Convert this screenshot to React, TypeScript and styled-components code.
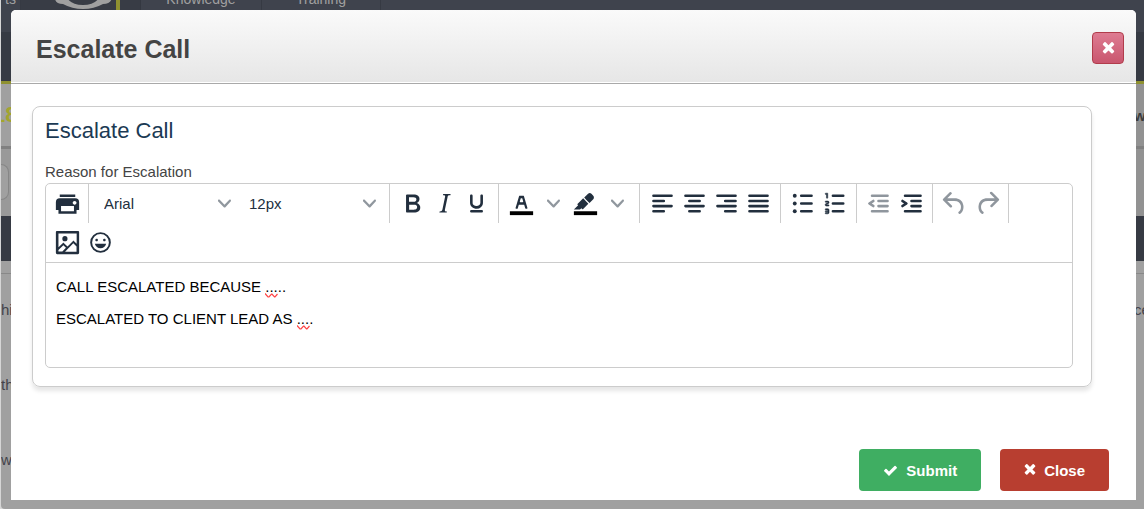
import React from 'react';
import styled, { createGlobalStyle } from 'styled-components';

const GlobalStyle = createGlobalStyle`
  *, *::before, *::after { box-sizing: border-box; }
  body {
    margin: 0;
    background: #d6d6d6;
    font-family: Arial, "Liberation Sans", sans-serif;
    font-size: 15px;
  }
`;

const Page = styled.div`
  position: relative;
  min-height: 100vh;
  display: flex;
`;

/* Dimmed application page behind the dialog */

const Backdrop = styled.div`
  flex: 1;
  min-width: 0;
  margin-left: 1px;
  overflow: hidden;
  background: #a0a0a0;
  border-radius: 0 0 0 4px;
`;

const NavBar = styled.nav`
  display: flex;
  height: 62px;
  margin-top: -30px;
  background: #3f434d;
`;

const NavItem = styled.a<{ $width: number }>`
  width: ${(p) => p.$width}px;
  border-right: 1px solid #363a43;
  color: #a0a0a0;
  font-size: 14px;
  line-height: 58px;
  text-align: center;
  text-decoration: none;
`;

const LogoSlot = styled.div`
  display: flex;
  align-items: flex-end;
  justify-content: flex-end;
  width: 120px;
  padding: 0 20px 0 0;
  background: #383c45;
  border-right: 1px solid #343841;
`;

const SubNav = styled.div`
  height: 52px;
  background: #363a43;
  border-bottom: 3px solid #8f9130;
`;

const TitleStrip = styled.div`
  display: flex;
  align-items: center;
  justify-content: space-between;
  height: 65px;
  border-bottom: 3px solid #808080;
  background: linear-gradient(90deg, #a0a0a0 50%, #929292 50%);
  color: #3c3c3c;
  font-weight: bold;
`;

const TicketNumber = styled.span`
  margin-left: -8px;
  color: #a3a52d;
  font-size: 22px;
`;

const Clipped = styled.span`
  width: 10px;
  white-space: nowrap;
`;

const FilterStrip = styled.div`
  height: 67px;
  background: linear-gradient(90deg, #999 50%, #929292 50%);
`;

const FilterPill = styled.div`
  width: 8px;
  height: 36px;
  margin-top: 15px;
  border: 1px solid #868686;
  border-left: 0;
  border-radius: 0 10px 10px 0;
  background: #a0a0a0;
  display: inline-block;
`;

const DarkBand = styled.div`
  height: 45px;
  background: #363a43;
`;

const TableHead = styled.div`
  height: 13px;
  border-bottom: 1px solid #888;
`;

const TableLine = styled.div`
  display: flex;
  justify-content: space-between;
  height: 75px;
  padding-top: 26px;
  color: #43434b;
  line-height: 20px;
`;

/* Dialog */

const Dialog = styled.section`
  position: absolute;
  inset: 10px 8px 9px 11px;
  display: flex;
  flex-direction: column;
  background: #fff;
  border-radius: 5px 5px 0 0;
`;

const DialogHeader = styled.header`
  display: flex;
  align-items: center;
  justify-content: space-between;
  padding: 22px 12px 16px 25px;
  border-bottom: 1px solid #a9a9a9;
  border-radius: 5px 5px 0 0;
  background: linear-gradient(#fafafa, #e6e6e6);
  box-shadow: inset 0 -1px 0 #fff;
`;

const DialogTitle = styled.h1`
  margin: 0;
  color: #444;
  font-size: 25px;
  line-height: 35px;
`;

const DismissButton = styled.button`
  display: flex;
  align-items: center;
  justify-content: center;
  align-self: flex-start;
  width: 32px;
  height: 32px;
  padding: 0;
  border: 1px solid #b13c4b;
  border-radius: 4px;
  background: linear-gradient(#de7c92, #c9566e);
  color: #fff;
`;

const DialogBody = styled.div`
  flex: 1;
  padding: 22px 44px 22px 21px;
`;

const Panel = styled.div`
  padding: 11px 18px 18px 12px;
  border: 1px solid #ccc;
  border-radius: 8px;
  box-shadow: 0 4px 4px rgba(0, 0, 0, 0.1);
`;

const PanelTitle = styled.h2`
  margin: 0 0 16px;
  color: #1b3a54;
  font-size: 22px;
  font-weight: normal;
  line-height: 26px;
`;

const FieldLabel = styled.div`
  padding-top: 1px;
  color: #444;
  line-height: 22px;
`;

const Editor = styled.div`
  border: 1px solid #ccc;
  border-radius: 5px;
`;

const Toolbar = styled.div`
  display: flex;
  flex-wrap: wrap;
  border-bottom: 1px solid #ccc;
  color: #222f3e;
`;

const ToolGroup = styled.div<{ $last?: boolean; $roomy?: boolean }>`
  display: flex;
  align-items: center;
  gap: ${(p) => (p.$roomy ? 0 : 1)}px;
  height: 39px;
  padding: 0 ${(p) => (p.$roomy ? 6 : 5)}px 1px;
  border-right: ${(p) => (p.$last ? '0' : '1px solid #ccc')};
`;

const PickerGroup = styled(ToolGroup)`
  gap: 0;
`;

const SplitButton = styled.div`
  display: flex;
`;

const ToolButton = styled.button`
  display: flex;
  align-items: center;
  justify-content: center;
  width: 32px;
  height: 32px;
  padding: 0;
  border: 0;
  background: none;
  color: inherit;

  &:disabled { opacity: 0.5; }
`;

const Picker = styled.label`
  display: grid;
  grid-template-columns: 1fr 30px;
  align-items: center;
  width: 145px;

  svg {
    grid-area: 1 / 2;
    justify-self: center;
    pointer-events: none;
  }
`;

const PickerSelect = styled.select`
  grid-area: 1 / 1 / 2 / 3;
  height: 32px;
  padding: 0 10px;
  border: 0;
  appearance: none;
  background: none;
  color: #222f3e;
  font: inherit;
`;

const EditArea = styled.div`
  min-height: 104px;
  padding: 13px 10px 12px;
  color: #000;
  line-height: 22px;
  outline: none;

  p { margin: 0 0 10px; }
`;

const Misspelt = styled.span`
  position: relative;

  svg {
    position: absolute;
    left: 0;
    bottom: -3px;
  }
`;

const DialogFooter = styled.footer`
  display: flex;
  justify-content: flex-end;
  gap: 19px;
  padding: 0 27px 9px;
`;

const ActionButton = styled.button<{ $color: string }>`
  display: flex;
  align-items: center;
  gap: 8px;
  height: 42px;
  padding: 0 24px;
  border: 0;
  border-radius: 4px;
  background: ${(p) => p.$color};
  color: #fff;
  font: bold 15px Arial, "Liberation Sans", sans-serif;
`;

/* Icons */

const Glyph = ({ d, children }: { d?: string; children?: React.ReactNode }) => (
  <svg width="31" height="31" viewBox="0 0 24 24" fill="currentColor" fillRule="evenodd" aria-hidden="true">
    {d && <path d={d} />}
    {children}
  </svg>
);

const Lines = ({ d, children }: { d: string; children?: React.ReactNode }) => (
  <Glyph>
    <path d={d} fill="none" stroke="currentColor" strokeWidth="2" strokeLinecap="round" />
    {children}
  </Glyph>
);

const Chevron = () => (
  <svg width="13" height="13" viewBox="0 0 10 10" fill="#222f3e" fillOpacity="0.5" aria-hidden="true">
    <path d="M8.7 2.2c.3-.3.8-.3 1 0 .4.4.4.9 0 1.2L5.7 7.8c-.3.3-.9.3-1.2 0L.2 3.4a.8.8 0 0 1 0-1.2c.3-.3.8-.3 1.1 0L5 6l3.7-3.8Z" />
  </svg>
);

const Squiggle = () => (
  <svg width="13" height="5" viewBox="0 0 13 5" aria-hidden="true">
    <path d="M0 .5 3 4l1 0L6.500 1 7 1l2.500 3h.5l2.500-3" fill="none" stroke="#f44" strokeWidth="1.200" />
  </svg>
);

const Times = ({ size }: { size: number }) => (
  <svg width={size} height={size} viewBox="224 356 1344 1344" fill="currentColor" aria-hidden="true">
    <path d="M1490 1322q0 40-28 68l-136 136q-28 28-68 28t-68-28l-294-294-294 294q-28 28-68 28t-68-28l-136-136q-28-28-28-68t28-68l294-294-294-294q-28-28-28-68t28-68l136-136q28-28 68-28t68 28l294 294 294-294q28-28 68-28t68 28l136 136q28 28 28 68t-28 68l-294 294 294 294q28 28 28 68z" />
  </svg>
);

const Check = () => (
  <svg width="15" height="15" viewBox="0 0 1792 1792" fill="currentColor" aria-hidden="true">
    <path d="M1671 566q0 40-28 68l-724 724-136 136q-28 28-68 28t-68-28l-136-136-362-362q-28-28-28-68t28-68l136-136q28-28 68-28t68 28l294 295 656-657q28-28 68-28t68 28l136 136q28 28 28 68z" />
  </svg>
);

const Logo = () => (
  <svg width="68" height="62" viewBox="0 0 68 62" aria-hidden="true">
    <path d="M3 26 Q2 34 11 34 Q20 39 31 39 Q42 39 51 34 Q60 34 60 26Z" fill="#a0a0a0" />
    <path d="M14 26 Q18 35 31 35 Q44 35 48 26Z" fill="#383c45" />
    <path d="M64 20H68V62H64Z" fill="#8f9130" />
  </svg>
);

const PRINT = 'M18 8H6a3 3 0 0 0-3 3v6h2v3h14v-3h2v-6a3 3 0 0 0-3-3Zm-1 10H7v-4h10v4Zm.5-5c-.8 0-1.5-.7-1.5-1.5s.7-1.5 1.5-1.5 1.5.7 1.5 1.5-.7 1.5-1.5 1.5Zm.5-8H6v2h12V5Z';
const BOLD = 'M7.8 19c-.3 0-.5 0-.6-.2l-.2-.5V5.7c0-.2 0-.4.2-.5l.6-.2h5c1.5 0 2.7.3 3.5 1 .7.6 1.1 1.4 1.1 2.5a3 3 0 0 1-.6 1.9c-.4.6-1 1-1.6 1.2.4.1.9.3 1.3.6s.8.7 1 1.2c.4.4.5 1 .5 1.6 0 1.3-.4 2.3-1.3 3-.8.7-2.1 1-3.8 1H7.8Zm5-8.3c.6 0 1.2-.1 1.6-.5.4-.3.6-.7.6-1.3 0-1.1-.8-1.7-2.3-1.7H9.3v3.5h3.4Zm.5 6c.7 0 1.3-.1 1.7-.4.4-.4.6-.9.6-1.5s-.2-1-.7-1.4c-.4-.3-1-.4-2-.4H9.4v3.8h4Z';
const ITALIC = 'm16.7 4.7-.1.9h-.3c-.6 0-1 0-1.4.3-.3.3-.4.6-.5 1.1l-2.1 9.8v.6c0 .5.4.8 1.4.8h.2l-.2.8H8l.2-.8h.2c1.1 0 1.8-.5 2-1.5l2-9.8.1-.5c0-.6-.4-.8-1.4-.8h-.3l.2-.9h5.8Z';
const UNDERLINE = 'M16 5c.6 0 1 .4 1 1v5.5a4 4 0 0 1-.4 1.8l-1 1.4a5.3 5.3 0 0 1-5.5 1 5 5 0 0 1-1.6-1c-.5-.4-.8-.9-1.1-1.4a4 4 0 0 1-.4-1.8V6c0-.6.4-1 1-1s1 .4 1 1v5.5c0 .3 0 .6.2 1l.6.7a3.3 3.3 0 0 0 2.2.8 3.4 3.4 0 0 0 2.2-.8c.3-.2.4-.5.6-.8l.2-.9V6c0-.6.4-1 1-1ZM8 17h8c.6 0 1 .4 1 1s-.4 1-1 1H8a1 1 0 0 1 0-2Z';
const TEXT_COLOR = 'M8.7 16h-.8a.5.5 0 0 1-.5-.6l2.7-9c.1-.3.3-.4.5-.4h2.8c.2 0 .4.1.5.4l2.7 9a.5.5 0 0 1-.5.6h-.8a.5.5 0 0 1-.4-.4l-.7-2.2c0-.3-.3-.4-.5-.4h-3.4c-.2 0-.4.1-.5.4l-.7 2.2c0 .3-.2.4-.4.4Zm2.6-7.6-.6 2a.5.5 0 0 0 .5.6h1.6a.5.5 0 0 0 .5-.6l-.6-2c0-.3-.3-.4-.5-.4h-.4c-.2 0-.4.1-.5.4Z';
const HIGHLIGHT = 'M7.7 16.7H3l3.3-3.3-.7-.8L10.2 8l4 4.1-4 4.2c-.2.2-.6.2-.8 0l-.6-.7-1.1 1.1Zm5-7.5L11 7.4l3-2.9a2 2 0 0 1 2.6 0L18 6c.7.7.7 2 0 2.7l-2.9 2.9-1.8-1.8-.5-.6Z';
const NUMBERS = 'M6 4v3.5c0 .3-.2.5-.5.5a.5.5 0 0 1-.5-.5V5h-.5a.5.5 0 0 1 0-1H6Zm-1 8.8.2.2h1.3c.3 0 .5.2.5.5s-.2.5-.5.5H4.9a1 1 0 0 1-.9-1V13c0-.4.3-.8.6-1l1.2-.4.2-.3a.2.2 0 0 0-.2-.2H4.5a.5.5 0 0 1-.5-.5c0-.3.2-.5.5-.5h1.6c.5 0 .9.4.9 1v.1c0 .4-.3.8-.6 1l-1.2.4-.2.3ZM7 17v2c0 .6-.4 1-1 1H4.5a.5.5 0 0 1 0-1h1.2c.2 0 .3-.1.3-.3 0-.2-.1-.3-.3-.3H4.4a.4.4 0 1 1 0-.8h1.3c.2 0 .3-.1.3-.3 0-.2-.1-.3-.3-.3H4.5a.5.5 0 1 1 0-1H6c.6 0 1 .4 1 1Z';
const OUTDENT = 'M8.6 13.2a1 1 0 0 1-1.2 1.6l-3-2a1 1 0 0 1 0-1.6l3-2a1 1 0 0 1 1.2 1.6L6.8 12l1.8 1.2Z';
const INDENT = 'M4.4 13.2L6.2 12l-1.8-1.2a1 1 0 0 1 1.2-1.6l3 2a1 1 0 0 1 0 1.6l-3 2a1 1 0 1 1-1.2-1.6Z';
const UNDO = 'M6.4 8H12c3.7 0 6.2 2 6.8 5.1.6 2.7-.4 5.6-2.3 6.8a1 1 0 0 1-1-1.8c1.1-.6 1.8-2.7 1.4-4.6-.5-2.1-2.1-3.5-4.9-3.5H6.4l3.3 3.3a1 1 0 1 1-1.4 1.4l-5-5a1 1 0 0 1 0-1.4l5-5a1 1 0 0 1 1.4 1.4L6.4 8Z';
const REDO = 'M17.6 10H12c-2.8 0-4.4 1.4-4.9 3.5-.4 2 .3 4 1.4 4.6a1 1 0 1 1-1 1.8c-2-1.2-2.9-4.1-2.3-6.8.6-3 3-5.1 6.8-5.1h5.6l-3.3-3.3a1 1 0 1 1 1.4-1.4l5 5a1 1 0 0 1 0 1.4l-5 5a1 1 0 0 1-1.4-1.4l3.3-3.3Z';
const IMAGE = 'm5 15.7 3.3-3.2c.3-.3.7-.3 1 0L12 15l4.1-4c.3-.4.8-.4 1 0l2 1.9V5H5v10.7ZM5 18V19h3l2.8-2.9-2-2L5 17.9Zm14-3-2.5-2.4-6.4 6.5H19v-4ZM4 3h16c.6 0 1 .4 1 1v16c0 .6-.4 1-1 1H4a1 1 0 0 1-1-1V4c0-.6.4-1 1-1Zm6 8a2 2 0 1 0 0-4 2 2 0 0 0 0 4Z';
const EMOJI = 'M9 11c.6 0 1-.4 1-1s-.4-1-1-1a1 1 0 0 0-1 1c0 .6.4 1 1 1Zm6 0c.6 0 1-.4 1-1s-.4-1-1-1a1 1 0 0 0-1 1c0 .6.4 1 1 1Zm-3 5.5c2.1 0 4-1.5 4.4-3.5H7.6c.5 2 2.3 3.5 4.4 3.5ZM12 4a8 8 0 1 0 0 16 8 8 0 0 0 0-16Zm0 14.5a6.5 6.5 0 1 1 0-13 6.5 6.5 0 0 1 0 13Z';

const ColorBar = () => <path d="M3 18h18v3H3z" fill="#000" />;

const Tool = ({ label, disabled, children }: { label: string; disabled?: boolean; children: React.ReactNode }) => (
  <ToolButton type="button" aria-label={label} title={label} disabled={disabled}>
    {children}
  </ToolButton>
);

const FormatPicker = ({ label, options }: { label: string; options: string[] }) => (
  <Picker>
    <PickerSelect aria-label={label} defaultValue={options[0]}>
      {options.map((o) => (
        <option key={o}>{o}</option>
      ))}
    </PickerSelect>
    <Chevron />
  </Picker>
);

const EditorToolbar = () => (
  <Toolbar role="toolbar" aria-label="Formatting">
    <ToolGroup>
      <Tool label="Print"><Glyph d={PRINT} /></Tool>
    </ToolGroup>
    <PickerGroup>
      <FormatPicker label="Font" options={['Arial']} />
      <FormatPicker label="Font size" options={['12px']} />
    </PickerGroup>
    <ToolGroup $roomy>
      <Tool label="Bold"><Glyph d={BOLD} /></Tool>
      <Tool label="Italic"><Glyph d={ITALIC} /></Tool>
      <Tool label="Underline"><Glyph d={UNDERLINE} /></Tool>
    </ToolGroup>
    <ToolGroup $roomy>
      <SplitButton>
        <Tool label="Text color"><Glyph d={TEXT_COLOR}><ColorBar /></Glyph></Tool>
        <Tool label="Text color menu"><Chevron /></Tool>
      </SplitButton>
      <SplitButton>
        <Tool label="Background color"><Glyph d={HIGHLIGHT}><ColorBar /></Glyph></Tool>
        <Tool label="Background color menu"><Chevron /></Tool>
      </SplitButton>
    </ToolGroup>
    <ToolGroup $roomy>
      <Tool label="Align left"><Lines d="M5 6h14M5 10h8M5 14h14M5 18h8" /></Tool>
      <Tool label="Align center"><Lines d="M5 6h14M8 10h8M5 14h14M8 18h8" /></Tool>
      <Tool label="Align right"><Lines d="M5 6h14M11 10h8M5 14h14M11 18h8" /></Tool>
      <Tool label="Justify"><Lines d="M5 6h14M5 10h14M5 14h14M5 18h14" /></Tool>
    </ToolGroup>
    <ToolGroup>
      <Tool label="Bullet list">
        <Lines d="M11 6h8M11 12h8M11 18h8">
          <circle cx="6" cy="6" r="1.5" />
          <circle cx="6" cy="12" r="1.5" />
          <circle cx="6" cy="18" r="1.5" />
        </Lines>
      </Tool>
      <Tool label="Numbered list">
        <Lines d="M10 6h8M10 12h8M10 18h8"><path d={NUMBERS} stroke="currentColor" strokeWidth="0.4" /></Lines>
      </Tool>
    </ToolGroup>
    <ToolGroup>
      <Tool label="Decrease indent" disabled>
        <Lines d="M7 6h12M12 10h7M12 14h7M7 18h12"><path d={OUTDENT} /></Lines>
      </Tool>
      <Tool label="Increase indent">
        <Lines d="M7 6h12M12 10h7M12 14h7M7 18h12"><path d={INDENT} /></Lines>
      </Tool>
    </ToolGroup>
    <ToolGroup>
      <Tool label="Undo" disabled><Glyph d={UNDO} /></Tool>
      <Tool label="Redo" disabled><Glyph d={REDO} /></Tool>
    </ToolGroup>
    <ToolGroup $last>
      <Tool label="Insert image"><Glyph d={IMAGE} /></Tool>
      <Tool label="Emoticons"><Glyph d={EMOJI} /></Tool>
    </ToolGroup>
  </Toolbar>
);

export default function App() {
  return (
    <>
      <GlobalStyle />
      <Page>
        <Backdrop aria-hidden="true">
          <NavBar>
            <NavItem href="#" $width={20}>ts</NavItem>
            <LogoSlot><Logo /></LogoSlot>
            <NavItem href="#" $width={121}>Knowledge</NavItem>
            <NavItem href="#" $width={119}>Training</NavItem>
          </NavBar>
          <SubNav />
          <TitleStrip>
            <TicketNumber>18</TicketNumber>
            <Clipped>wa</Clipped>
          </TitleStrip>
          <FilterStrip><FilterPill /></FilterStrip>
          <DarkBand />
          <TableHead />
          <TableLine><span>hi</span><Clipped>ce</Clipped></TableLine>
          <TableLine><span>th</span></TableLine>
          <TableLine><span>w</span></TableLine>
        </Backdrop>

        <Dialog role="dialog" aria-labelledby="dialog-title">
          <DialogHeader>
            <DialogTitle id="dialog-title">Escalate Call</DialogTitle>
            <DismissButton type="button" aria-label="Dismiss"><Times size={13} /></DismissButton>
          </DialogHeader>
          <DialogBody>
            <Panel>
              <PanelTitle>Escalate Call</PanelTitle>
              <FieldLabel id="reason-label">Reason for Escalation</FieldLabel>
              <Editor>
                <EditorToolbar />
                <EditArea
                  role="textbox"
                  aria-multiline="true"
                  aria-labelledby="reason-label"
                  contentEditable
                  suppressContentEditableWarning
                >
                  <p>CALL ESCALATED BECAUSE <Misspelt>.....<Squiggle /></Misspelt></p>
                  <p>ESCALATED TO CLIENT LEAD AS <Misspelt>....<Squiggle /></Misspelt></p>
                </EditArea>
              </Editor>
            </Panel>
          </DialogBody>
          <DialogFooter>
            <ActionButton type="submit" $color="#3fae62"><Check />Submit</ActionButton>
            <ActionButton type="button" $color="#b83e30"><Times size={12} />Close</ActionButton>
          </DialogFooter>
        </Dialog>
      </Page>
    </>
  );
}
